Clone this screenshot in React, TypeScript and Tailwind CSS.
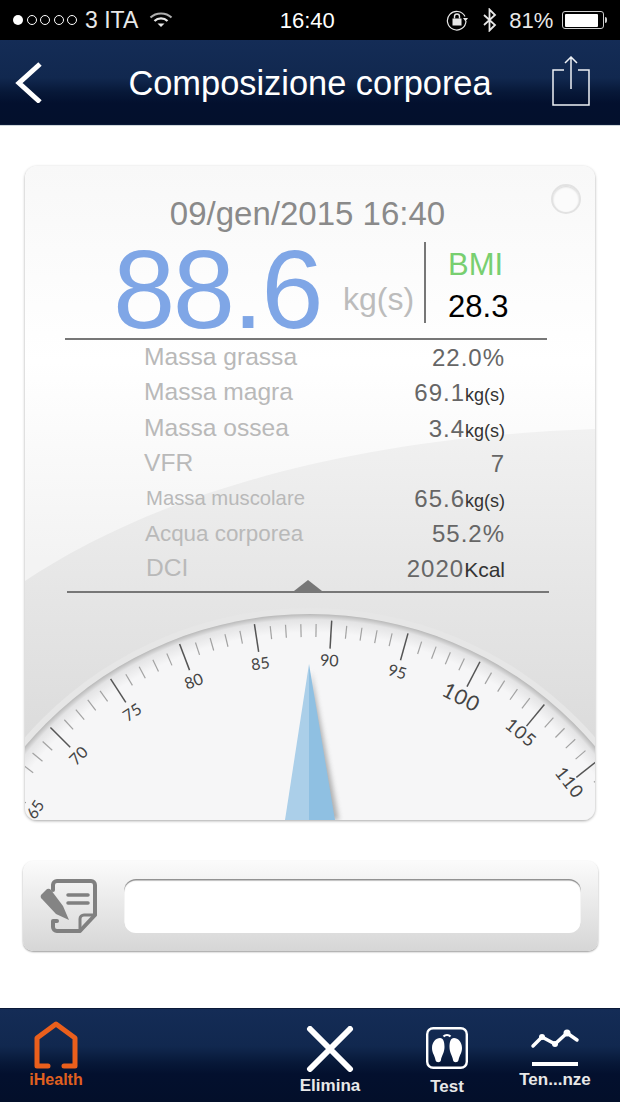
const CX = 285;
const CY = 388;

// angle in degrees for a value on the scale, needle sits at 88.6
const angleFor = (v: number) => (v - 88.6) * 2.42;

const polar = (r: number, deg: number) => {
  const a = (deg * Math.PI) / 180;
  return { x: CX + r * Math.sin(a), y: CY - r * Math.cos(a) };
};

const ticks: number[] = [];
for (let v = 60; v <= 114; v++) ticks.push(v);

const labels = [65, 70, 75, 80, 85, 90, 95, 100, 105, 110];

const Gauge = () => (
  <svg viewBox="0 0 570 221" className="block w-[570px] h-[221px]">
    <defs>
      <radialGradient id="dial" gradientUnits="userSpaceOnUse" cx={CX} cy={CY} r={373}>
        <stop offset="0.95" stopColor="#f6f6f7" />
        <stop offset="0.985" stopColor="#e4e4e5" />
        <stop offset="1" stopColor="#b9b9b9" />
      </radialGradient>
      <filter id="blur" x="-30%" y="-10%" width="160%" height="120%">
        <feGaussianBlur stdDeviation="2.5" />
      </filter>
    </defs>
    <circle cx={CX} cy={CY} r={379} fill="#e6e6e6" />
    <circle cx={CX} cy={CY} r={373} fill="url(#dial)" />
    {ticks.map((v) => {
      const major = v % 5 === 0;
      const a = angleFor(v);
      const p1 = polar(major ? 367 : 363, a);
      const p2 = polar(major ? 339 : 350, a);
      return (
        <line
          key={v}
          x1={p1.x}
          y1={p1.y}
          x2={p2.x}
          y2={p2.y}
          stroke={major ? "#555555" : "#a2a2a2"}
          strokeWidth={major ? 1.5 : 1.2}
        />
      );
    })}
    {labels.map((v) => {
      const a = angleFor(v);
      const p = polar(v >= 105 ? 331 : 328, a);
      const big = v >= 100;
      return (
        <text
          key={v}
          x={p.x}
          y={p.y}
          textAnchor="middle"
          dominantBaseline="central"
          transform={`rotate(${a} ${p.x} ${p.y})`}
          fontSize={big ? (v === 100 ? 21 : 18) : 16}
          letterSpacing={big ? 1 : 0}
          fill="#444444"
          style={{ fontFamily: "Lato, sans-serif" }}
        >
          {v}
        </text>
      );
    })}
    {/* needle */}
    <polygon points="286,72 314,221 284,221" fill="#777777" opacity="0.55" filter="url(#blur)" />
    <polygon points="284,65 260,221 284,221" fill="#abcfe9" />
    <polygon points="284,65 284,221 310,221" fill="#8fc0e2" />
  </svg>
);

const Row = ({
  label,
  value,
  unit,
  labelClass = "text-[24.6px]",
  unitClass = "text-[18px]",
}: {
  label: string;
  value: string;
  unit?: string;
  labelClass?: string;
  unitClass?: string;
}) => (
  <div className="flex h-[35px] items-center justify-between">
    <span className={`${labelClass} text-[#b9b9b9]`}>{label}</span>
    <span className="flex items-baseline text-[24px] tracking-[1px] text-[#666666]">
      {value}
      {unit && <span className={`${unitClass} tracking-normal text-[#333333]`}>{unit}</span>}
    </span>
  </div>
);

const StatusBar = () => (
  <div className="flex h-10 items-center bg-black pl-[13px] text-[23px] font-light text-[#e8e8e8]">
    <div className="flex items-center gap-[3.5px]">
      <span className="h-[10px] w-[10px] rounded-full bg-white" />
      <span className="h-[10px] w-[10px] rounded-full border border-white" />
      <span className="h-[10px] w-[10px] rounded-full border border-white" />
      <span className="h-[10px] w-[10px] rounded-full border border-white" />
      <span className="h-[10px] w-[10px] rounded-full border border-white" />
    </div>
    <span className="ml-[8px]">3 ITA</span>
    <svg viewBox="0 0 24 18" className="ml-[11px] h-[18px] w-[24px]" fill="none" stroke="#e8e8e8">
      <path d="M1.5 6.500C7 1 17 1 22.500 6.500" strokeWidth="2" opacity="0.75" />
      <path d="M5.500 10C9 6.500 15 6.500 18.500 10" strokeWidth="2.2" />
      <polygon points="12,16 8.500,12.500 15.500,12.500" fill="#e8e8e8" stroke="none" />
    </svg>
    <span className="ml-[106px] w-[56px] text-center text-[22px] font-normal text-white">16:40</span>
    <svg viewBox="0 0 22 22" className="ml-[111px] h-[22px] w-[22px]" fill="none" stroke="#e8e8e8">
      <path d="M19 7.500A9.300 9.300 0 1 0 20 12" strokeWidth="1.2" />
      <polygon points="17,9 22,9 19.500,12.500" fill="#e8e8e8" stroke="none" />
      <rect x="6.500" y="9.500" width="9" height="7" fill="#e8e8e8" stroke="none" />
      <path d="M8.500 9.500V7.500a2.500 2.500 0 0 1 5 0v2" strokeWidth="1.4" />
    </svg>
    <svg viewBox="0 0 14 24" className="ml-[15px] h-[24px] w-[14px]" fill="none" stroke="#e8e8e8" strokeWidth="1.8">
      <path d="M1 7l11 10-5.500 5.500V1.500L12 7 1 17" />
    </svg>
    <span className="ml-[12px] text-[22px]">81%</span>
    <div className="ml-[9px] flex items-center">
      <div className="h-[18px] w-[42px] rounded-[3px] border border-[#cfcfcf] p-[1.5px]">
        <div className="h-full w-[33px] rounded-[1px] bg-white" />
      </div>
      <div className="ml-[1px] h-[6px] w-[2px] rounded-r-sm bg-[#cfcfcf]" />
    </div>
  </div>
);

const NavBar = () => (
  <div className="flex h-[85px] items-center border-b border-[#0b1a38] bg-[linear-gradient(#142c56_0%,#11284f_45%,#071838_62%,#03102e_75%,#03102c_100%)]">
    <svg viewBox="0 0 28 42" className="ml-[15px] h-[42px] w-[28px]" fill="none" stroke="white" strokeWidth="5">
      <path d="M25 3L4 22l21 19" />
    </svg>
    <span className="ml-[85px] mt-[3px] w-[364px] whitespace-nowrap text-center text-[34.4px] text-white">
      Composizione corporea
    </span>
    <svg viewBox="0 0 38 50" className="ml-[60px] mt-[-3px] h-[50px] w-[38px]" fill="none" stroke="#eef1f5" strokeWidth="1.5">
      <path d="M12 14H1v35h36V14H26" />
      <path d="M19 1v32M13 7l6-6 6 6" />
    </svg>
  </div>
);

const Card = () => (
  <div className="relative ml-[25px] flex h-[654px] w-[570px] flex-col overflow-hidden rounded-[12px] bg-[linear-gradient(#f8f8f8_0%,#ffffff_30%,#f3f3f3_60%)] shadow-[0_1px_3px_rgba(0,0,0,0.35)]">
    {/* background swoosh */}
    <svg viewBox="0 0 570 654" className="absolute inset-0 h-[654px] w-[570px]">
      <defs>
        <linearGradient id="swoosh" x1="0" y1="0" x2="0" y2="1">
          <stop offset="0" stopColor="#f1f1f1" />
          <stop offset="1" stopColor="#d6d6d6" />
        </linearGradient>
      </defs>
      <path d="M0 415C105 345 285 273 570 263V654H0Z" fill="url(#swoosh)" />
    </svg>
    {/* radio */}
    <div className="absolute right-[14px] top-[18px] h-[30px] w-[30px] rounded-full border-2 border-[#e2e2e2] bg-[#fbfbfb] shadow-[inset_0_1px_2px_rgba(0,0,0,0.15)]" />

    <div className="relative flex flex-col">
      <div className="mt-[30px] h-[37px] pr-[5px] text-center text-[33px] leading-[36px] text-[#8a8a8a]">
        09/gen/2015 16:40
      </div>
      <div className="flex h-[105px] items-start">
        <span className="ml-[88px] mt-[9px] text-[112px] leading-[96px] tracking-[-2.5px] text-[#7fa6e6]">88.6</span>
        <span className="ml-[22px] mt-[46px] text-[32px] leading-[40px] text-[#bcbcbc]">kg(s)</span>
        <div className="ml-[10px] mt-[9px] h-[81px] w-[2px] bg-[#777777]" />
        <div className="ml-[22px] mt-[11px] flex flex-col text-[31px] leading-[42px]">
          <span className="text-[#78cf70]">BMI</span>
          <span className="text-black">28.3</span>
        </div>
      </div>
      <div className="ml-[40px] h-[2px] w-[482px] bg-[#777777]" />
      <div className="ml-[119px] w-[361px]">
        <Row label="Massa grassa" value="22.0%" />
        <Row label="Massa magra" value="69.1" unit="kg(s)" />
        <div className="h-[1px]" />
        <Row label="Massa ossea" value="3.4" unit="kg(s)" />
        <Row label="VFR" value="7" />
        <Row label="Massa muscolare" value="65.6" unit="kg(s)" labelClass="text-[20.3px] pl-[2px]" />
        <Row label="Acqua corporea" value="55.2%" labelClass="text-[22.4px] pl-[1px]" />
        <Row label="DCI" value="2020" unit="Kcal" labelClass="text-[24.6px] pl-[2px]" unitClass="text-[21px]" />
      </div>
      <div className="relative ml-[42px] mt-[5px] h-[2px] w-[482px] bg-[#777777]">
        <div className="absolute left-[227px] top-[-11px] h-0 w-0 border-x-[14px] border-b-[11px] border-x-transparent border-b-[#777777]" />
      </div>
    </div>
    <div className="relative mt-auto">
      <Gauge />
    </div>
  </div>
);

const NoteBox = () => (
  <div className="ml-[23px] mt-[41px] flex h-[90px] w-[575px] items-center rounded-[10px] bg-[linear-gradient(#fbfbfb,#d6d6d6)] shadow-[0_1px_2px_rgba(0,0,0,0.4)]">
    <svg viewBox="0 0 60 60" className="ml-[15px] h-[60px] w-[60px] shrink-0" fill="none">
      <g stroke="#808080" strokeLinejoin="round" strokeLinecap="round">
        <path d="M15 14V9a4 4 0 0 1 4-4h34a4 4 0 0 1 4 4v30L42 55H19a4 4 0 0 1-4-4v-6h4" strokeWidth="4" />
        <path d="M57 39H46a4 4 0 0 0-4 4v12" strokeWidth="3" />
        <path d="M30 19H50M30 27H50" strokeWidth="3.5" />
      </g>
      <path d="M4 23a3 3 0 0 1 0-5l4-4a3 3 0 0 1 5 0L25 30l6 14-13-6Z" fill="#848484" />
    </svg>
    <div className="ml-[26px] h-[54px] w-[457px] rounded-[12px] bg-white shadow-[inset_0_1.5px_1px_rgba(0,0,0,0.45)]" />
  </div>
);

const TabBar = () => (
  <div className="mt-auto flex h-[94px] border-t border-[#0b1a38] bg-[linear-gradient(#142c56_0%,#11284f_40%,#071838_58%,#03102e_70%,#030f2a_100%)] text-[17px] font-bold">
    <div className="flex w-[112px] flex-col items-center pt-[12px] text-[16px] text-[#e0601f]">
      <svg viewBox="0 0 44 48" className="h-[48px] w-[44px]" fill="none" stroke="#ea5f1c" strokeWidth="5" strokeLinejoin="round" strokeLinecap="round">
        <path d="M14 45H3V17L22 3l19 14v28H30" />
      </svg>
      <span className="mt-[1px] leading-[20px]">iHealth</span>
    </div>
    <div className="ml-[162px] flex w-[112px] flex-col items-center pt-[17px] text-[#e8e8e8]">
      <svg viewBox="0 0 48 46" className="h-[46px] w-[48px]" fill="none" stroke="white" strokeWidth="6" strokeLinecap="round">
        <path d="M4 3l40 40M44 3L4 43" />
      </svg>
      <span className="mt-[4px] leading-[20px]">Elimina</span>
    </div>
    <div className="ml-[8px] flex w-[106px] flex-col items-center pt-[18px] text-[#e8e8e8]">
      <svg viewBox="0 0 42 42" className="h-[42px] w-[42px]" fill="white">
        <rect x="1.200" y="1.200" width="39.600" height="39.600" rx="6" fill="none" stroke="white" strokeWidth="2.4" />
        <path d="M17.500 9.500a5 5 0 0 1 7 0" fill="none" stroke="white" strokeWidth="2.2" />
        <path d="M14 11c-4 0-8 4-8 10 0 5 2.500 7 3.500 12 .5 3 5 3 5.500 0 .3-4 3.500-7 3.500-13 0-5-1-9-4.500-9Z" />
        <path d="M28 11c4 0 8 4 8 10 0 5-2.500 7-3.500 12-.5 3-5 3-5.500 0-.3-4-3.500-7-3.500-13 0-5 1-9 4.500-9Z" />
      </svg>
      <span className="mt-[8px] leading-[20px]">Test</span>
    </div>
    <div className="flex w-[110px] flex-col items-center pt-[20px] text-[#e8e8e8]">
      <svg viewBox="0 0 50 38" className="h-[38px] w-[50px]" fill="white" stroke="white" strokeLinecap="round" strokeLinejoin="round">
        <path d="M3 17L12 8l13 7L37 4l10 7" strokeWidth="3.5" fill="none" />
        <circle cx="12" cy="8" r="3" stroke="none" />
        <circle cx="25" cy="15" r="3" stroke="none" />
        <circle cx="37" cy="4" r="3.500" stroke="none" />
        <path d="M2 35H48" strokeWidth="4" strokeLinecap="butt" />
      </svg>
      <span className="mt-[3px] leading-[20px]">Ten...nze</span>
    </div>
  </div>
);

export default function App() {
  return (
    <div className="flex h-[1102px] w-[620px] flex-col overflow-hidden bg-white font-['Liberation_Sans',sans-serif]">
      <StatusBar />
      <NavBar />
      <div className="h-[1px] bg-[#cfd6da]" />
      <div className="h-[40px]" />
      <Card />
      <NoteBox />
      <TabBar />
    </div>
  );
}
